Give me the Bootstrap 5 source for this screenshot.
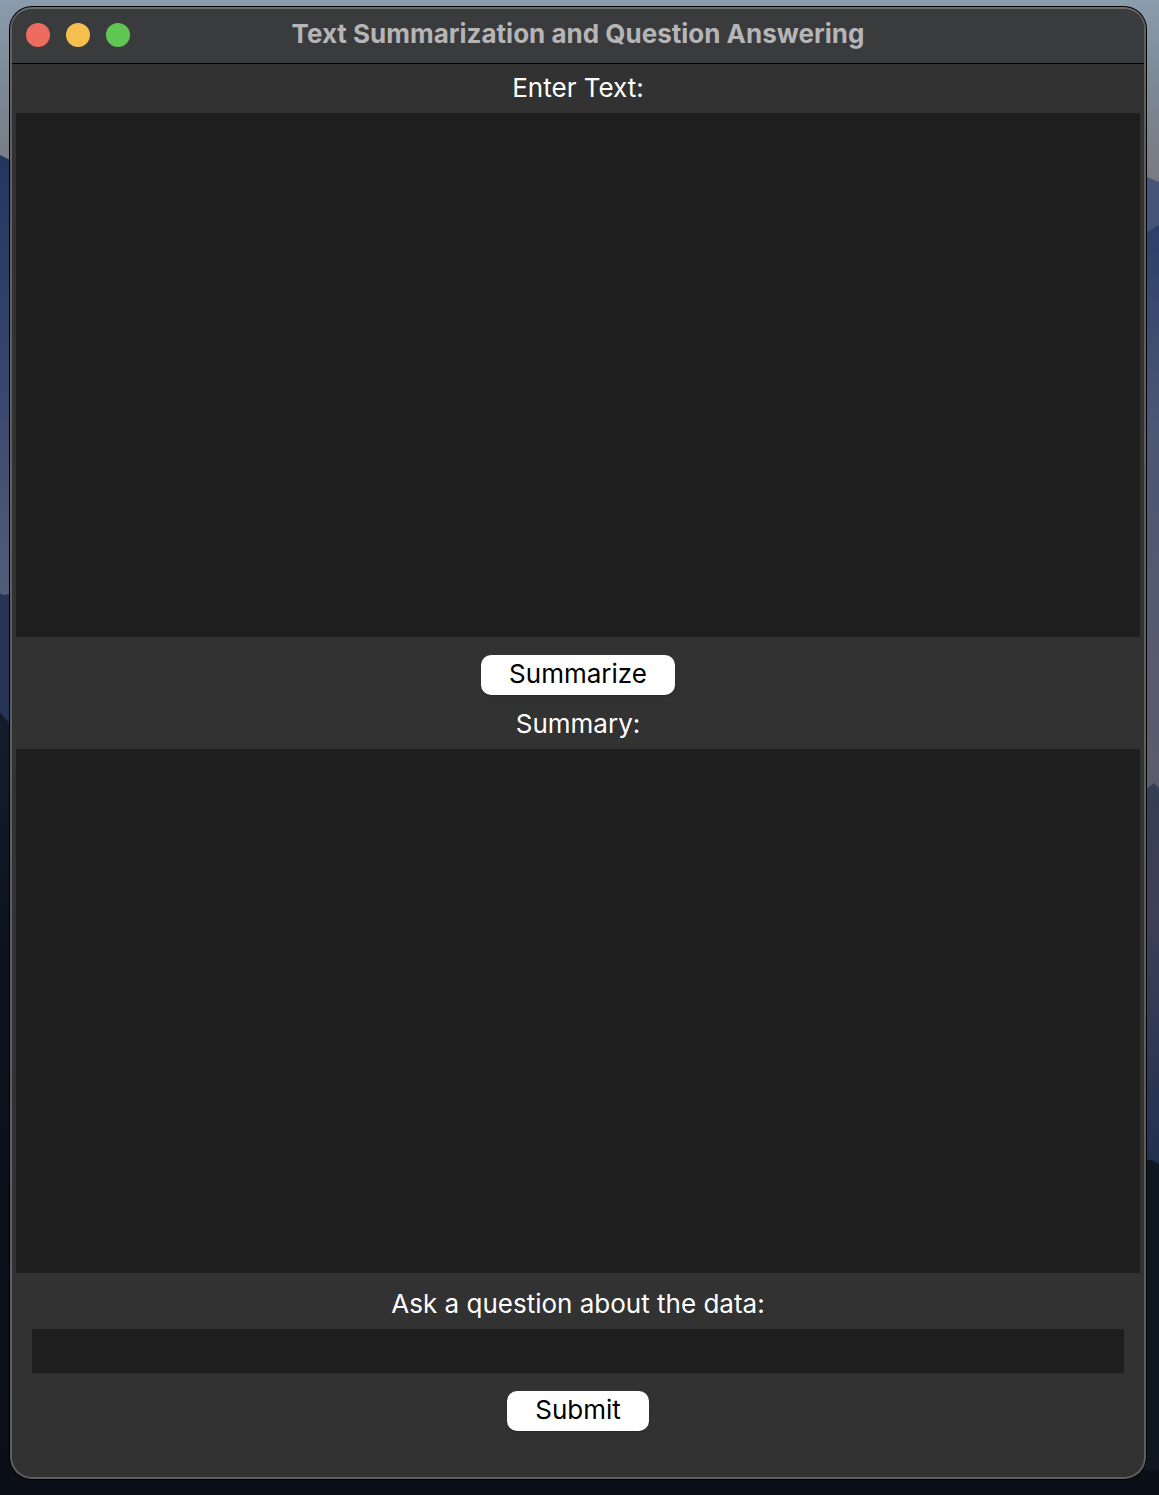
<!DOCTYPE html>
<html lang="en">
<head>
<meta charset="utf-8">
<meta name="viewport" content="width=device-width, initial-scale=1">
<title>Text Summarization and Question Answering</title>
<link href="https://cdn.jsdelivr.net/npm/bootstrap@5.3.0/dist/css/bootstrap.min.css" rel="stylesheet">
<style>
  body { font-family: Inter, "Liberation Sans", sans-serif; font-size: 26px; line-height: 32px; background: #0b1018; }
  .desktop { padding: 7px 13px 16px 10px; isolation: isolate; }
  .wallpaper { inset: 0; z-index: -1; }
  .app-window { background: #323232; border: 2px solid #5f5f5f; border-top-color: #6e6e6c; border-radius: 22px; box-shadow: 0 0 0 1px #000; }
  .title-bar { background: #3a3b3d; border-bottom: 1px solid #000; height: 55px; padding: 0 14px; }
  .title-text { color: #b5b5b6; font-size: 26px; line-height: 32px; font-weight: 700; margin: 0; padding-bottom: 4px; }
  .lights { gap: 16px; width: 104px; padding-bottom: 2px; }
  .light { width: 24px; height: 24px; border: 0; border-radius: 50%; padding: 0; }
  .light-close { background: #ed6b5f; }
  .light-min { background: #f5bf4f; }
  .light-zoom { background: #61c554; }
  .form-area { padding: 1px 4px 40px; }
  .caption { color: #fff; text-align: center; padding: 7px 0 9px; }
  .dark-field, .dark-field:focus { background: #1e1e1e; color: #fff; border: 0; border-radius: 0; box-shadow: none; font-size: 26px; }
  .text-pane { min-height: 160px; resize: none; }
  .question-row { padding: 0 16px; }
  .question-input { height: 44px; }
  .question-input, .question-input:focus { box-shadow: 0 1px 0 #2b2b2b; }
  .push-btn { --bs-btn-bg: #fff; --bs-btn-color: #000; --bs-btn-hover-bg: #eee; --bs-btn-hover-color: #000; --bs-btn-border-width: 0; --bs-btn-border-radius: 10px; --bs-btn-font-size: 26px; --bs-btn-line-height: 32px; --bs-btn-padding-x: 28px; margin: 18px 0 6px; padding-top: 3px; padding-bottom: 5px; box-shadow: 0 1px 2px rgba(0,0,0,.3); }
</style>
<script src="https://cdn.jsdelivr.net/npm/bootstrap@5.3.0/dist/js/bootstrap.bundle.min.js"></script>
</head>
<body>
<div class="desktop position-relative d-flex min-vh-100">
  <svg class="wallpaper position-absolute w-100 h-100" viewBox="0 0 1159 1495" preserveAspectRatio="none" aria-hidden="true">
    <defs>
      <linearGradient id="sky" x1="0" y1="0" x2="0" y2="1"><stop offset="0" stop-color="#8b9cae"/><stop offset=".45" stop-color="#7b8894"/><stop offset="1" stop-color="#77777f"/></linearGradient>
      <linearGradient id="ridgeL" x1="0" y1="0" x2="0" y2="1"><stop offset="0" stop-color="#243660"/><stop offset=".5" stop-color="#36466c"/><stop offset="1" stop-color="#535e78"/></linearGradient>
      <linearGradient id="ridgeR" x1="0" y1="0" x2="0" y2="1"><stop offset="0" stop-color="#2c3f6a"/><stop offset=".35" stop-color="#4c5775"/><stop offset="1" stop-color="#5c5d6b"/></linearGradient>
      <linearGradient id="lowR" x1="0" y1="0" x2="0" y2="1"><stop offset="0" stop-color="#353d54"/><stop offset=".35" stop-color="#3c4058"/><stop offset="1" stop-color="#22304f"/></linearGradient>
      <linearGradient id="night" x1="0" y1="0" x2="0" y2="1"><stop offset="0" stop-color="#151d2c"/><stop offset=".3" stop-color="#0c131e"/><stop offset="1" stop-color="#0a0f19"/></linearGradient>
    </defs>
    <rect width="1159" height="200" fill="url(#sky)"/>
    <path d="M0 155 10 160V600H0Z" fill="url(#ridgeL)"/>
    <path d="M0 593 3 595 10 594V725H0Z" fill="#263555"/>
    <path d="M0 712 10 724V1495H0Z" fill="url(#night)"/>
    <path d="M1140 174 1159 182V260H1140Z" fill="#465479"/>
    <path d="M1140 236 1159 225V800H1140Z" fill="url(#ridgeR)"/>
    <path d="M1140 794 1154 783 1159 788V1165H1140Z" fill="url(#lowR)"/>
    <path d="M1140 1160 1152 1160 1159 1164V1495H1140Z" fill="#0f1722"/>
    <rect y="1470" width="1159" height="25" fill="#0b1018"/>
  </svg>

  <main class="app-window d-flex flex-column flex-grow-1 overflow-hidden">
    <header class="title-bar d-flex align-items-center">
      <div class="lights d-flex">
        <button type="button" class="light light-close" aria-label="Close"></button>
        <button type="button" class="light light-min" aria-label="Minimize"></button>
        <button type="button" class="light light-zoom" aria-label="Zoom"></button>
      </div>
      <h1 class="title-text flex-grow-1 text-center">Text Summarization and Question Answering</h1>
      <div class="lights"></div>
    </header>
    <form class="form-area d-flex flex-column flex-grow-1">
      <label class="caption" for="source">Enter Text:</label>
      <textarea id="source" class="form-control dark-field text-pane flex-fill"></textarea>
      <button type="button" class="btn push-btn align-self-center">Summarize</button>
      <label class="caption" for="summary">Summary:</label>
      <textarea id="summary" class="form-control dark-field text-pane flex-fill"></textarea>
      <label class="caption mt-2" for="question">Ask a question about the data:</label>
      <div class="question-row">
        <input id="question" type="text" class="form-control dark-field question-input">
      </div>
      <button type="submit" class="btn push-btn align-self-center">Submit</button>
    </form>
  </main>
</div>
</body>
</html>
